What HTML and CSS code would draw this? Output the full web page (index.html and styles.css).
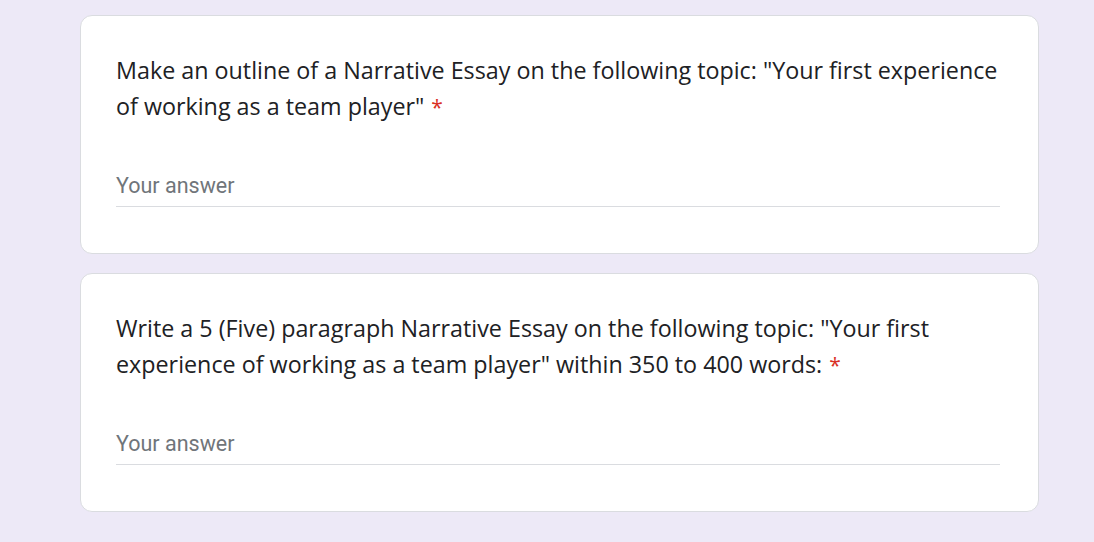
FILE: index.html
```html
<!DOCTYPE html>
<html>
<head>
<meta charset="utf-8">
<link rel="stylesheet" href="styles.css">
</head>
<body>
<div class="page">
  <div class="card">
    <div class="title">Make an outline of a Narrative Essay on the following topic: "Your first experience of working as a team player"<span class="req">*</span></div>
    <div class="field"><span class="ph">Your answer</span></div>
  </div>
  <div class="card">
    <div class="title">Write a 5 (Five) paragraph Narrative Essay on the following topic: "Your first experience of working as a team player" within 350 to 400 words:<span class="req">*</span></div>
    <div class="field"><span class="ph">Your answer</span></div>
  </div>
</div>
</body>
</html>
```
FILE: styles.css
```css
html, body {
  margin: 0;
  padding: 0;
  background: #ede9f7;
}
.page {
  display: flex;
  flex-direction: column;
  gap: 19px;
  padding: 15px 0 0 80px;
  width: 959px;
}
.card {
  background: #fff;
  border: 1px solid #dadce0;
  border-radius: 12px;
  padding: 36px 36px 46px 35px;
  box-sizing: border-box;
  height: 239px;
}
.title {
  font-family: "Open Sans", sans-serif;
  font-size: 23.3px;
  line-height: 36px;
  color: #202124;
}
.req {
  display: inline-block;
  margin-left: 7px;
  font-size: 21px;
  line-height: 1;
  color: #d93025;
}
.field {
  margin-top: 50px;
  width: 884px;
  height: 33px;
  border-bottom: 1px solid #dadce0;
  box-sizing: border-box;
  display: flex;
  align-items: flex-start;
}
.ph {
  font-family: Roboto, sans-serif;
  font-size: 21.5px;
  line-height: 24px;
  color: #70757a;
}
```
